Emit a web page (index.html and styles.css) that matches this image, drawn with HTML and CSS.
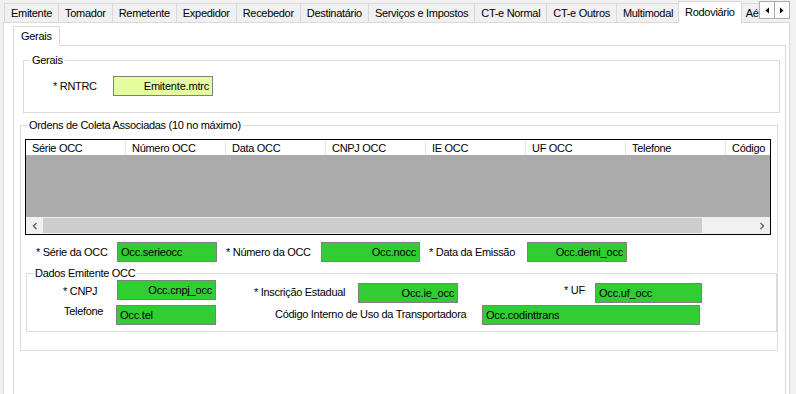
FILE: index.html
```html
<!DOCTYPE html>
<html lang="pt-BR">
<head>
  <meta charset="UTF-8" />
  <title>CT-e - Rodoviário</title>
  <link rel="stylesheet" href="styles.css">
</head>
<body>
  <div class="window">

    <div class="tabbar">
      <div class="tabs">
        <div class="tab">Emitente</div>
        <div class="tab">Tomador</div>
        <div class="tab">Remetente</div>
        <div class="tab">Expedidor</div>
        <div class="tab">Recebedor</div>
        <div class="tab">Destinatário</div>
        <div class="tab">Serviços e Impostos</div>
        <div class="tab">CT-e Normal</div>
        <div class="tab">CT-e Outros</div>
        <div class="tab">Multimodal</div>
        <div class="tab active">Rodoviário</div>
        <div class="tab">Aéreo</div>
      </div>
      <div class="tab-scroll">
        <span class="scroll-btn"><svg width="6" height="7" viewBox="0 0 6 7"><path d="M5 0.5 L1.5 3.5 L5 6.5 Z" fill="#000"/></svg></span>
        <span class="scroll-btn"><svg width="6" height="7" viewBox="0 0 6 7"><path d="M1 0.5 L4.5 3.5 L1 6.5 Z" fill="#000"/></svg></span>
      </div>
    </div>

    <div class="page">
      <div class="subtabs">
        <div class="subtab">Gerais</div>
      </div>

      <div class="subpage">

        <fieldset class="group group-gerais">
          <legend>Gerais</legend>
          <div class="row row-rntrc">
            <span class="lbl lbl-rntrc">* RNTRC</span>
            <div class="field pale right w-rntrc">Emitente.mtrc</div>
          </div>
        </fieldset>

        <fieldset class="group group-occ">
          <legend>Ordens de Coleta Associadas (10 no máximo)</legend>

          <div class="grid">
            <div class="grid-head">
              <div class="col">Série OCC</div>
              <div class="col">Número OCC</div>
              <div class="col">Data OCC</div>
              <div class="col">CNPJ OCC</div>
              <div class="col">IE OCC</div>
              <div class="col">UF OCC</div>
              <div class="col">Telefone</div>
              <div class="col col-last">Código</div>
            </div>
            <div class="grid-body"></div>
            <div class="hscroll">
              <span class="arrow"><svg width="8" height="8" viewBox="0 0 8 8"><path d="M5.5 1 L2.5 4 L5.5 7" fill="none" stroke="#606060" stroke-width="1.4"/></svg></span>
              <span class="thumb"></span>
              <span class="track"></span>
              <span class="arrow"><svg width="8" height="8" viewBox="0 0 8 8"><path d="M2.5 1 L5.5 4 L2.5 7" fill="none" stroke="#606060" stroke-width="1.4"/></svg></span>
            </div>
          </div>

          <div class="row row-occ">
            <span class="lbl w-serie-l">* Série da OCC</span>
            <div class="field green w-serie">Occ.serieocc</div>
            <span class="lbl w-numero-l">* Número da OCC</span>
            <div class="field green right w-numero">Occ.nocc</div>
            <span class="lbl w-data-l">* Data da Emissão</span>
            <div class="field green right w-data">Occ.demi_occ</div>
          </div>

          <fieldset class="group group-emit">
            <legend>Dados Emitente OCC</legend>
            <div class="row row-a">
              <span class="lbl w-cnpj-l">* CNPJ</span>
              <div class="field green right w-cnpj">Occ.cnpj_occ</div>
              <span class="lbl w-ie-l">* Inscrição Estadual</span>
              <div class="field green right w-ie">Occ.ie_occ</div>
              <span class="lbl w-uf-l">* UF</span>
              <div class="field green w-uf">Occ.uf_occ</div>
            </div>
            <div class="row row-b">
              <span class="lbl w-tel-l">Telefone</span>
              <div class="field green w-tel">Occ.tel</div>
              <span class="lbl w-cod-l">Código Interno de Uso da Transportadora</span>
              <div class="field green w-cod">Occ.codinttrans</div>
            </div>
          </fieldset>
        </fieldset>

      </div>
    </div>

  </div>
</body>
</html>
```

FILE: styles.css
```css
body {
  margin: 0;
  background: #f0f0f0;
  color: #000;
  font-family: "Liberation Sans", Arial, sans-serif;
  font-size: 11px;
  letter-spacing: -0.3px;
}

.window {
  width: 796px;
  height: 394px;
  overflow: hidden;
  background: #f0f0f0;
}

/* main tab strip */
.tabbar {
  display: flex;
  height: 23px;
  margin-bottom: -1px;
  position: relative;
  z-index: 2;
}

.tabs {
  display: flex;
  align-items: flex-end;
  width: 759px;
  height: 23px;
  padding-left: 4px;
  box-sizing: border-box;
  overflow: hidden;
}

.tab {
  flex-shrink: 0;
  height: 19px;
  box-sizing: border-box;
  margin-bottom: 1px;
  margin-left: -1px;
  padding: 0 6px;
  border: 1px solid #d9d9d9;
  border-bottom: 0;
  background: #f0f0f0;
  line-height: 18px;
  white-space: nowrap;
}

.tab:first-child {
  margin-left: 0;
}

.tab.active {
  position: relative;
  z-index: 1;
  height: 22px;
  margin: 0 -2px 0 -2px;
  padding: 0 6px;
  background: #fff;
  line-height: 20px;
}

.tab-scroll {
  display: flex;
  margin-top: 1px;
}

.scroll-btn {
  display: flex;
  align-items: center;
  justify-content: center;
  width: 16px;
  height: 18px;
  box-sizing: border-box;
  border: 1px solid #adadad;
  background: #fcfcfc;
}

.scroll-btn + .scroll-btn {
  margin-left: -1px;
}

/* page of the selected tab */
.page {
  margin-left: 3px;
  width: 787px;
  height: 380px;
  box-sizing: border-box;
  border: 1px solid #d9d9d9;
  background: #fff;
  padding: 3px 3px 0 9px;
}

.subtabs {
  display: flex;
  height: 20px;
  margin-bottom: -1px;
  position: relative;
  z-index: 1;
}

.subtab {
  height: 20px;
  box-sizing: border-box;
  padding: 0 7px;
  border: 1px solid #d9d9d9;
  border-bottom: 0;
  background: #fff;
  line-height: 19px;
}

.subpage {
  height: 360px;
  box-sizing: border-box;
  border: 1px solid #d9d9d9;
  background: #fff;
  overflow: hidden;
}

/* group boxes */
.group {
  margin: 0;
  padding: 0;
  min-width: 0;
  border: 1px solid #dcdcdc;
}

.group legend {
  margin-left: 6px;
  padding: 0 2px;
  line-height: 13px;
}

.group-gerais {
  margin: 8px 5px 0 9px;
  padding-bottom: 16px;
}

.group-occ {
  margin: 6px 7px 0 6px;
  padding-bottom: 18px;
}

.group-emit {
  margin: 5px 0 0 5px;
  padding-bottom: 6px;
}

/* rows, labels and fields */
.row {
  display: flex;
  align-items: flex-start;
}

.lbl {
  flex-shrink: 0;
  line-height: 13px;
  white-space: nowrap;
}

.field {
  flex-shrink: 0;
  height: 20px;
  box-sizing: border-box;
  border: 1px solid #7f7f7f;
  padding: 0 3px;
  line-height: 18px;
  letter-spacing: -0.2px;
  white-space: nowrap;
  overflow: hidden;
}

.field.right {
  text-align: right;
}

.field.green {
  background: #32cd32;
}

.field.pale {
  background: #e5fd9d;
}

.row-rntrc {
  margin-top: 9px;
  padding-left: 29px;
  align-items: center;
}

.lbl-rntrc { width: 60px; }
.w-rntrc { width: 100px; }

.row-occ {
  margin-top: 7px;
  padding-left: 15px;
  align-items: center;
}

.w-serie-l { width: 81px; }
.w-serie { width: 100px; }
.w-numero-l { width: 95px; margin-left: 9px; }
.w-numero { width: 99px; }
.w-data-l { width: 98px; margin-left: 9px; }
.w-data { width: 100px; }

.row-a {
  padding-left: 36px;
}

.w-cnpj-l { width: 54px; margin-top: 5px; }
.w-cnpj { width: 99px; }
.w-ie-l { width: 104px; margin-left: 38px; margin-top: 6px; }
.w-ie { width: 100px; margin-top: 3px; }
.w-uf-l { width: 31px; margin-left: 106px; margin-top: 4px; }
.w-uf { width: 107px; margin-top: 3px; }

.row-b {
  margin-top: 2px;
  padding-left: 37px;
}

.w-tel-l { width: 52px; }
.w-tel { width: 100px; }
.w-cod-l { width: 207px; margin-left: 59px; margin-top: 3px; }
.w-cod { width: 218px; }

/* grid */
.grid {
  margin: 7px 6px 0 4px;
  border: 1px solid #000;
}

.grid-head {
  display: flex;
  height: 15px;
  overflow: hidden;
  background: #fff;
}

.col {
  flex: 0 0 100px;
  box-sizing: border-box;
  padding: 1px 0 0 6px;
  border-right: 1px solid #e5e5e5;
  line-height: 15px;
  white-space: nowrap;
}

.col-last {
  flex: 1 1 auto;
  border-right: 0;
}

.grid-body {
  height: 62px;
  background: #ababab;
}

.hscroll {
  display: flex;
  height: 17px;
  background: #f0f0f0;
}

.hscroll .arrow {
  display: flex;
  align-items: center;
  justify-content: center;
  width: 17px;
}

.hscroll .thumb {
  width: 659px;
  margin: 1px 0;
  background: #cdcdcd;
}

.hscroll .track {
  flex: 1;
}
```
